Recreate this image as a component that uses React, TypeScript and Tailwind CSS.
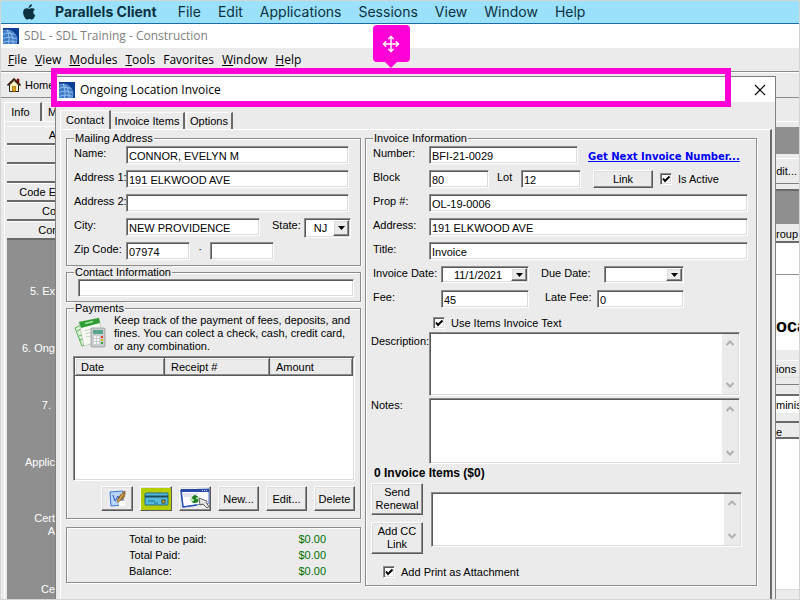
import React from "react";
import { Move } from "lucide-react";
import clsx from "clsx";

const sunken =
  "border border-t-[#8c8c8c] border-l-[#8c8c8c] border-r-white border-b-white bg-white shadow-[inset_1px_1px_0_#5a5a5a,inset_-1px_-1px_0_#dcdcdc]";
const raised =
  "border border-t-white border-l-white border-r-[#5a5a5a] border-b-[#5a5a5a] bg-[#ebebeb] shadow-[inset_-1px_-1px_0_#8c8c8c,inset_1px_1px_0_#dcdcdc]";
const group =
  "min-w-0 border border-[#8c8c8c] shadow-[1px_1px_0_#fff,inset_1px_1px_0_#fff]";

const macMenus = ["File", "Edit", "Applications", "Sessions", "View", "Window", "Help"];
const appMenus = ["File", "View", "Modules", "Tools", "Favorites", "Window", "Help"];
const sideButtons = ["A", "", "", "Code E", "Co", "Cor"];
const totals = ["Total to be paid:", "Total Paid:", "Balance:"];

function GlobeIcon() {
  return (
    <svg viewBox="0 0 16 16" className="h-4 w-4 shrink-0" aria-hidden="true">
      <rect width="16" height="16" fill="#0b3f93" />
      <circle cx="4" cy="12" r="10" fill="#3f7cc6" stroke="#6fa3e0" strokeWidth=".8" />
      <path
        d="M4 2C8 4 10.500 9 10 16M4 2C6 6 6.500 10 5.500 16M0 6.500C4 4.500 8 5 11.500 6.500M0 10.500C5 8.500 10 9 13.500 11M0 14.500C5 12.500 10 13 13.500 14.500"
        fill="none"
        stroke="#a9cdf5"
        strokeWidth=".8"
      />
    </svg>
  );
}

function HouseIcon() {
  return (
    <svg viewBox="0 0 14 14" className="h-[14px] w-[14px] shrink-0" aria-hidden="true">
      <path d="M10 1h2v4h-2z" fill="#c00000" stroke="#400" strokeWidth=".5" />
      <path d="M2.500 7v6.500h9V7L7 2.500z" fill="#fff6c0" stroke="#222" />
      <path d="M.5 7.500 7 1l6.500 6.500" fill="none" stroke="#3a1a00" strokeWidth="1.600" />
      <path d="M5.500 8.500h3v5h-3z" fill="#e8a000" stroke="#7a4a00" strokeWidth=".6" />
    </svg>
  );
}

function AppleIcon() {
  return (
    <svg viewBox="0 0 14 16" className="h-4 w-[14px]" fill="#0b3142" aria-hidden="true">
      <path d="M9.900.2c.1 1-.3 1.900-.9 2.600-.6.700-1.500 1.200-2.300 1.100-.1-.9.300-1.900.9-2.500C8.200.7 9.200.200 9.900.2zM12.900 5.600c-1 .6-1.600 1.500-1.600 2.700 0 1.400.8 2.500 2 3-.3.900-.7 1.700-1.300 2.500-.6.900-1.200 1.700-2.200 1.700-.9 0-1.200-.6-2.300-.6s-1.500.6-2.300.6c-1 0-1.700-.9-2.300-1.800C1.200 11.300.5 8.300 1.700 6.100c.6-1.200 1.800-1.900 3-1.900 1 0 1.800.6 2.500.6.600 0 1.600-.7 2.900-.6 1.100 0 2.100.5 2.800 1.400z" />
    </svg>
  );
}

function MoneyIcon() {
  return (
    <svg viewBox="0 0 32 32" className="h-8 w-8 shrink-0" aria-hidden="true">
      <path d="M1 11 9 7l6 19-7 3z" fill="#dff3dc" stroke="#52b04e" />
      <path d="M3 14l6-3M5 19l5-2M6 23l5-2" stroke="#52b04e" />
      <path d="M5 5 25 1l4 22-19 6z" fill="#f6f8f4" stroke="#a9b9a5" strokeWidth=".6" />
      <path d="M5 5 25 1l1 5L7 11z" fill="#2f9e34" />
      <path d="M11 6.500l8-2" stroke="#a6e3a3" strokeWidth="1.500" />
      <path d="M10 14l10-3M11 17l6-1.500M12 20l5-1" stroke="#c9d4c5" />
      <rect x="17" y="11" width="14" height="19" rx="1" fill="#c9cdd0" stroke="#8b9094" strokeWidth=".7" />
      <rect x="19" y="13" width="10" height="4" fill="#58a690" />
      <path d="M20 20h5M20 23h5M20 26h5" stroke="#f5f5f5" strokeWidth="2" strokeDasharray="2 1" />
      <path d="M27 19h2v2h-2z" fill="#e33" />
      <path d="M27 22h2v2h-2z" fill="#e9b400" />
      <path d="M27 25h2v2h-2z" fill="#3a3" />
    </svg>
  );
}

function CheckSignIcon() {
  return (
    <svg viewBox="0 0 17 17" className="h-[17px] w-[17px]" aria-hidden="true">
      <path d="M1 2 14 1v14L2 16z" fill="#b9d5f7" stroke="#3f79cf" />
      <path d="M10 11h6v5h-6z" fill="#fff" />
      <path d="M4 5l2 6 3-5 1 5" fill="none" stroke="#2456c0" />
      <path d="M8 13c0-5 4-9 8-12 .5 4-1 8-4 9z" fill="#a9772c" stroke="#6b4712" strokeWidth=".6" />
      <path d="M8 13l6-9" stroke="#f3d79a" strokeWidth=".7" />
    </svg>
  );
}

function CardIcon() {
  return (
    <svg viewBox="0 0 30 22" className="h-[22px] w-[30px]" aria-hidden="true">
      <rect width="30" height="22" fill="#b7cf00" />
      <path d="M0 6 6 0M0 14 14 0M0 22 22 0M8 22 30 0M16 22 30 8M24 22l6-6" stroke="#a9c200" />
      <rect x="4" y="5" width="23" height="12" rx="1" fill="#55b9dc" stroke="#226b8a" />
      <path d="M4 8.500h23" stroke="#1c4a5c" strokeWidth="2" />
      <path d="M7 13h7M13 15h4" stroke="#1f6d8c" />
      <rect x="21" y="12" width="3" height="3" fill="#f5c400" stroke="#333" strokeWidth=".9" />
    </svg>
  );
}

function WebPayIcon() {
  return (
    <svg viewBox="0 0 30 22" className="h-[22px] w-[30px]" aria-hidden="true">
      <path d="M1 2 29 1v14L3 19z" fill="#fdfdff" stroke="#5a78c8" />
      <path d="M1 2 3 19l14-2" fill="none" stroke="#2a4fb5" strokeWidth="1.500" />
      <path d="M1 1h28v3H1z" fill="#2848a8" />
      <path d="M22 2.500h6" stroke="#c9d6ff" strokeDasharray="1 1" />
      <path d="M3 6h15M4 8h8" stroke="#c6cbe0" />
      <ellipse cx="15" cy="11.500" rx="5" ry="3.500" fill="#bfe7b8" />
      <path d="M17.500 9c-2-1.500-5-.5-4.500 1s4.500 1 4.500 2.500-3 2-5 1M15 7v8" fill="none" stroke="#157a1b" strokeWidth="1.700" />
      <path d="M19 10l8 3-1 1.500 3 4-2 1.500-4-4-3 1z" fill="#e4e4e4" stroke="#444" strokeWidth=".8" />
    </svg>
  );
}

function Field({ id, label, value = "", labelClass }: { id: string; label: string; value?: string; labelClass?: string }) {
  return (
    <div className="flex h-[18px] items-start">
      <label htmlFor={id} className={clsx("shrink-0 leading-[15px] whitespace-nowrap", labelClass)}>
        {label}
      </label>
      <TextBox id={id} value={value} className="flex-1" />
    </div>
  );
}

function TextBox({ id, value = "", className, label }: { id: string; value?: string; className?: string; label?: string }) {
  return (
    <input
      id={id}
      type="text"
      aria-label={label}
      defaultValue={value}
      className={clsx("h-[18px] min-w-0 px-[2px] pt-px", sunken, className)}
    />
  );
}

function DropDown({ id, value = "", className }: { id: string; value?: string; className?: string }) {
  return (
    <div className={clsx("relative flex", sunken, className)}>
      <select id={id} className="w-full appearance-none pr-[18px] pl-1 text-center">
        <option>{value}</option>
      </select>
      <span className={clsx("pointer-events-none absolute top-px right-px bottom-px flex w-4 items-center justify-center", raised)}>
        <svg viewBox="0 0 7 4" className="h-1 w-[7px]" aria-hidden="true">
          <path d="M0 0h7L3.500 4z" fill="#000" />
        </svg>
      </span>
    </div>
  );
}

function CheckBox({ id, label }: { id: string; label: string }) {
  return (
    <label htmlFor={id} className="flex items-center gap-[6px] whitespace-nowrap">
      <span className="relative h-3 w-3">
        <input id={id} type="checkbox" defaultChecked className={clsx("peer block h-3 w-3 appearance-none", sunken)} />
        <svg viewBox="0 0 12 12" className="pointer-events-none absolute inset-0 hidden h-3 w-3 peer-checked:block" aria-hidden="true">
          <path d="M3 5.500 5 8l4.500-4.500" fill="none" stroke="#000" strokeWidth="2" />
        </svg>
      </span>
      {label}
    </label>
  );
}

function Memo({ id, className, label }: { id: string; className?: string; label?: string }) {
  return (
    <div className={clsx("flex p-px", sunken, className)}>
      <textarea id={id} aria-label={label} className="min-w-0 flex-1 resize-none overflow-hidden px-1" />
      <div className="flex w-4 flex-col items-center justify-between bg-[#ebebeb] py-[6px]">
        <svg viewBox="0 0 8 6" className="h-[6px] w-2" aria-hidden="true">
          <path d="M.5 5 4 1.500 7.500 5" fill="none" stroke="#b0b0b0" strokeWidth="2" />
        </svg>
        <svg viewBox="0 0 8 6" className="h-[6px] w-2" aria-hidden="true">
          <path d="M.5 1 4 4.500 7.500 1" fill="none" stroke="#b0b0b0" strokeWidth="2" />
        </svg>
      </div>
    </div>
  );
}

function PushButton({ children, className, label }: { children: React.ReactNode; className?: string; label?: string }) {
  return (
    <button type="button" aria-label={label} className={clsx("flex items-center justify-center", raised, className)}>
      {children}
    </button>
  );
}

function MailingAddress() {
  return (
    <fieldset className={clsx(group, "flex flex-col gap-[6px] pt-[2px] pr-[11px] pb-[5px] pl-[7px]")}>
      <legend className="bg-[#ebebeb] px-px leading-3">Mailing Address</legend>
      <Field id="name" label="Name:" value="CONNOR, EVELYN M" labelClass="w-[52px]" />
      <Field id="address1" label="Address 1:" value="191 ELKWOOD AVE" labelClass="w-[52px]" />
      <Field id="address2" label="Address 2:" labelClass="w-[52px]" />
      <div className="flex h-[18px] items-start">
        <label htmlFor="city" className="w-[52px] shrink-0 leading-[15px]">City:</label>
        <TextBox id="city" value="NEW PROVIDENCE" className="flex-1" />
        <label htmlFor="state" className="ml-3 w-8 leading-[15px]">State:</label>
        <DropDown id="state" value="NJ" className="-mr-[2px] h-[20px] w-[47px]" />
      </div>
      <div className="flex h-[18px] items-start">
        <label htmlFor="zip" className="w-[52px] shrink-0 leading-[15px] whitespace-nowrap">Zip Code:</label>
        <TextBox id="zip" value="07974" className="w-16" />
        <span className="w-5 text-center leading-[15px]">·</span>
        <TextBox id="zip4" label="Zip extension" className="w-16" />
      </div>
    </fieldset>
  );
}

function Payments() {
  return (
    <fieldset className={clsx(group, "pr-[5px] pb-[7px] pl-[6px]")}>
      <legend className="ml-px bg-[#ebebeb] px-px leading-3">Payments</legend>
      <div className="flex gap-2">
        <span className="pt-[3px] pl-px">
          <MoneyIcon />
        </span>
        <p className="leading-[13px] whitespace-nowrap">
          Keep track of the payment of fees, deposits, and
          <br />
          fines. You can colect a check, cash, credit card,
          <br />
          or any combination.
        </p>
      </div>
      <div className={clsx("mt-[3px] h-[125px] p-px", sunken)}>
        <table className="w-full table-fixed border-collapse text-left">
          <thead>
            <tr>
              <th scope="col" className={clsx("h-[17px] w-[89px] pl-[5px] font-normal", raised)}>Date</th>
              <th scope="col" className={clsx("h-[17px] w-[105px] pl-[6px] font-normal", raised)}>Receipt #</th>
              <th scope="col" className={clsx("h-[17px] pl-[6px] font-normal", raised)}>Amount</th>
            </tr>
          </thead>
          <tbody />
        </table>
      </div>
      <div className="mt-[5px] flex justify-end gap-[7px]">
        <PushButton label="Check" className="h-[25px] w-8"><CheckSignIcon /></PushButton>
        <PushButton label="Credit card" className="h-[25px] w-8"><CardIcon /></PushButton>
        <PushButton label="Online payment" className="h-[25px] w-8"><WebPayIcon /></PushButton>
        <PushButton className="h-[25px] w-[41px]">New...</PushButton>
        <PushButton className="h-[25px] w-[41px]">Edit...</PushButton>
        <PushButton className="h-[25px] w-[41px]">Delete</PushButton>
      </div>
    </fieldset>
  );
}

function InvoiceInformation() {
  return (
    <fieldset className={clsx(group, "flex-1 pt-[2px] pr-2 pb-[6px] pl-[5px]")}>
      <legend className="ml-[2px] bg-[#ebebeb] px-px leading-3">Invoice Information</legend>
      <div className="flex flex-col gap-[6px] pl-[2px]">
        <div className="flex h-[18px] items-start">
          <label htmlFor="number" className="w-14 shrink-0 leading-[15px]">Number:</label>
          <TextBox id="number" value="BFI-21-0029" className="w-[149px]" />
          <a href="#next" className="ml-[10px] font-[Verdana,'DejaVu_Sans',sans-serif] text-[10px] leading-[22px] font-bold whitespace-nowrap text-[#0000f0] underline">
            Get Next Invoice Number...
          </a>
        </div>
        <div className="flex h-[18px] items-start">
          <label htmlFor="block" className="w-14 shrink-0 leading-[15px]">Block</label>
          <TextBox id="block" value="80" className="w-[60px]" />
          <label htmlFor="lot" className="w-8 pl-2 leading-[15px]">Lot</label>
          <TextBox id="lot" value="12" className="w-[60px]" />
          <PushButton className="mr-[7px] ml-3 h-[18px] w-[60px]">Link</PushButton>
          <span className="self-center"><CheckBox id="active" label="Is Active" /></span>
        </div>
        <Field id="prop" label="Prop #:" value="OL-19-0006" labelClass="w-14" />
        <Field id="address" label="Address:" value="191 ELKWOOD AVE" labelClass="w-14" />
        <Field id="title" label="Title:" value="Invoice" labelClass="w-14" />
        <div className="flex h-[18px] items-start">
          <label htmlFor="date" className="w-[68px] leading-[15px] whitespace-nowrap">Invoice Date:</label>
          <DropDown id="date" value="11/1/2021" className="h-[17px] w-[88px]" />
          <label htmlFor="due" className="w-[75px] pl-3 leading-[15px] whitespace-nowrap">Due Date:</label>
          <DropDown id="due" className="h-[17px] w-20" />
        </div>
        <div className="flex h-[18px] items-start">
          <label htmlFor="fee" className="w-[68px] leading-[15px]">Fee:</label>
          <TextBox id="fee" value="45" className="w-[88px]" />
          <label htmlFor="late" className="w-[68px] pl-4 leading-[15px] whitespace-nowrap">Late Fee:</label>
          <TextBox id="late" value="0" className="w-[87px]" />
        </div>
        <div className="flex h-[18px] items-center pl-[60px]">
          <CheckBox id="itemsText" label="Use Items Invoice Text" />
        </div>
      </div>
      <div className="flex items-start pr-2">
        <label htmlFor="description" className="w-[58px] leading-[18px]">Description:</label>
        <Memo id="description" className="h-16 flex-1" />
      </div>
      <div className="mt-[2px] flex items-start pr-2">
        <label htmlFor="notes" className="w-[58px] leading-[15px]">Notes:</label>
        <Memo id="notes" className="h-[66px] flex-1" />
      </div>
      <h2 className="pl-[3px] text-[12px] leading-[18px] font-bold">0 Invoice Items ($0)</h2>
      <div className="flex pt-px pr-[6px]">
        <div className="flex w-[60px] flex-col gap-[7px]">
          <PushButton className="h-8 w-[52px] leading-[13px]">Send<br />Renewal</PushButton>
          <PushButton className="h-8 w-[52px] leading-[13px]">Add CC<br />Link</PushButton>
        </div>
        <Memo id="message" label="Message" className="mt-[9px] h-[55px] flex-1" />
      </div>
      <div className="mt-[11px] pl-3">
        <CheckBox id="attach" label="Add Print as Attachment" />
      </div>
    </fieldset>
  );
}

function InvoiceDialog() {
  return (
    <div role="dialog" aria-label="Ongoing Location Invoice" className="absolute top-[75px] right-[23px] bottom-0 left-[54px] flex flex-col overflow-hidden border border-b-0 border-[#808080] bg-[#ebebeb]">
      <div className="flex h-[25px] shrink-0 items-center gap-[5px] bg-white pr-[9px] pl-[3px]">
        <GlobeIcon />
        <h1 className="flex-1 font-['Open_Sans',sans-serif] text-[12px]">Ongoing Location Invoice</h1>
        <button type="button" aria-label="Close">
          <svg viewBox="0 0 12 12" className="h-3 w-3" aria-hidden="true">
            <path d="M1 1l10 10M11 1 1 11" stroke="#000" strokeWidth="1.200" />
          </svg>
        </button>
      </div>
      <div role="tablist" className="flex h-[27px] shrink-0 items-end pl-1">
        <button type="button" role="tab" aria-selected="true" className="h-[19px] w-[51px] border-t border-r-2 border-l border-t-white border-r-[#6a6a6a] border-l-white">Contact</button>
        <button type="button" role="tab" aria-selected="false" className="h-[17px] w-[74px] border-t border-r-2 border-t-white border-r-[#6a6a6a] whitespace-nowrap">Invoice Items</button>
        <button type="button" role="tab" aria-selected="false" className="ml-px h-[17px] w-[47px] border-t border-r-2 border-l border-t-white border-r-[#6a6a6a] border-l-white">Options</button>
      </div>
      <div className="mr-[3px] ml-1 flex flex-1 items-start gap-1 border-t border-r-2 border-l border-t-white border-r-[#6a6a6a] border-l-white pt-[2px] pr-[13px] pl-[5px]">
        <div className="w-[295px] shrink-0">
          <MailingAddress />
          <fieldset className={clsx(group, "flex pt-px pr-[6px] pb-1 pl-[11px]")}>
            <legend className="-ml-1 bg-[#ebebeb] px-px leading-3">Contact Information</legend>
            <TextBox id="contact" label="Contact Information" className="flex-1" />
          </fieldset>
          <Payments />
          <dl className={clsx(group, "mt-2 flex flex-col py-[3px] pr-[34px] pl-[62px]")}>
            {totals.map((item) => (
              <div key={item} className="flex justify-between leading-4">
                <dt>{item}</dt>
                <dd className="text-[#007000]">$0.00</dd>
              </div>
            ))}
          </dl>
        </div>
        <InvoiceInformation />
      </div>
    </div>
  );
}

function SideBar() {
  return (
    <aside className="flex w-[60px] shrink-0 flex-col pl-[3px]">
      <div className="flex h-[23px] items-end pt-1">
        <button type="button" className="h-[19px] w-[38px] border-t border-r-2 border-l border-t-white border-r-[#6a6a6a] border-l-white pr-1">Info</button>
        <button type="button" className="ml-px h-[19px] w-[18px] border-t border-l border-white pl-1 text-left">M</button>
      </div>
      <div className="flex flex-1 flex-col border-t border-l border-white pt-1 pl-[2px]">
        {sideButtons.map((item, i) => (
          <button
            key={i}
            type="button"
            className="h-[19px] shrink-0 border-t border-b-2 border-t-white border-b-[#6a6a6a] pr-[5px] text-right whitespace-nowrap"
          >
            {item}
          </button>
        ))}
        <div className="flex flex-1 flex-col bg-[#8f8f8f] pt-11 pr-[6px] text-right leading-[14px] whitespace-nowrap text-white">
          <p className="h-[57px]">5. Ex</p>
          <p className="h-[57px]">6. Ong</p>
          <p className="h-[57px] pr-1">7.</p>
          <p className="h-[57px]">Applic</p>
          <p className="h-[70px] leading-[13px]">Cert<br />A</p>
          <p>Ce</p>
        </div>
      </div>
    </aside>
  );
}

function RightPane() {
  return (
    <div className="flex w-[23px] shrink-0 flex-col overflow-hidden pt-[23px] whitespace-nowrap">
      <div className="h-[6px] shrink-0 border-t border-white" />
      <div className="h-[27px] shrink-0 bg-[#8f8f8f]" />
      <div className="mt-1 flex h-[26px] shrink-0 items-center justify-end border-t border-b border-t-white border-b-[#808080] pr-[2px]">dit...</div>
      <div className="mt-[5px] h-[35px] shrink-0 border-t-2 border-[#6a6a6a] bg-[#8f8f8f]" />
      <div className="flex h-[19px] shrink-0 items-center border-b-2 border-[#6a6a6a] pt-[2px]">roup</div>
      <div className="h-8 shrink-0 border-b border-[#8f8f8f] bg-white" />
      <div className="flex h-[75px] shrink-0 items-center bg-white pt-[26px] text-[18px] font-bold">oca</div>
      <div className="mt-[10px] flex h-[18px] shrink-0 items-center border-t border-b border-t-white border-b-[#dcdcdc]">ions</div>
      <div className="mt-[6px] h-[10px] shrink-0 border-t border-[#808080]" />
      <div className="flex h-[19px] shrink-0 items-center border-t-2 border-[#6a6a6a] bg-white">minis</div>
      <div className="mt-2 flex h-[18px] shrink-0 items-center border-t-2 border-b-2 border-[#6a6a6a] pt-1">e</div>
      <div className="flex-1 bg-white" />
      <div className="h-[10px] shrink-0 border-t border-[#dcdcdc]" />
    </div>
  );
}

export default function App() {
  return (
    <div className="relative flex h-screen flex-col overflow-hidden border border-[#d4d4d4] bg-[#ebebeb] font-['Liberation_Sans',Arial,sans-serif] text-[11px] leading-[14px] text-black">
      <nav className="flex h-[23px] shrink-0 items-center gap-[17px] border-b border-[#1b6ca8] bg-[#9be1fb] pl-[21px] font-[Inter,sans-serif] text-[14px] text-[#0b3142]">
        <AppleIcon />
        <button type="button" className="mr-1 ml-[2px] font-bold">Parallels Client</button>
        {macMenus.map((item) => (
          <button key={item} type="button">{item}</button>
        ))}
      </nav>
      <div className="flex h-6 shrink-0 items-center gap-[5px] bg-white pl-[2px] font-['Open_Sans',sans-serif] text-[12px] text-[#808080]">
        <GlobeIcon />
        SDL - SDL Training - Construction
      </div>
      <nav className="flex h-6 shrink-0 items-center gap-2 border-b border-[#8c8c8c] pl-[7px] font-['Open_Sans',sans-serif] text-[12px]">
        {appMenus.map((item) => (
          <button key={item} type="button" className={item === "Favorites" ? "" : "first-letter:underline"}>
            {item}
          </button>
        ))}
      </nav>
      <div className="flex h-[26px] shrink-0 items-center border-t border-b border-t-white border-b-[#8c8c8c] pl-[6px]">
        <button type="button" className="flex items-center gap-1">
          <HouseIcon />
          Home
        </button>
      </div>
      <div className="flex min-h-0 flex-1 justify-between">
        <SideBar />
        <RightPane />
      </div>

      <InvoiceDialog />

      {/* callout around the draggable title bar */}
      <div className="pointer-events-none absolute top-[67px] right-[68px] left-[50px] flex h-[39px] justify-center border-[6px] border-[#ff00d6]">
        <div className="absolute bottom-[33px] flex flex-col items-center">
          <span className="flex h-[37px] w-[37px] items-center justify-center rounded bg-[#ff00d6] text-white">
            <Move size={18} strokeWidth={2} />
          </span>
          <svg viewBox="0 0 12 6" className="h-[6px] w-3" aria-hidden="true">
            <path d="M0 0h12L6 6z" fill="#ff00d6" />
          </svg>
        </div>
      </div>
    </div>
  );
}
